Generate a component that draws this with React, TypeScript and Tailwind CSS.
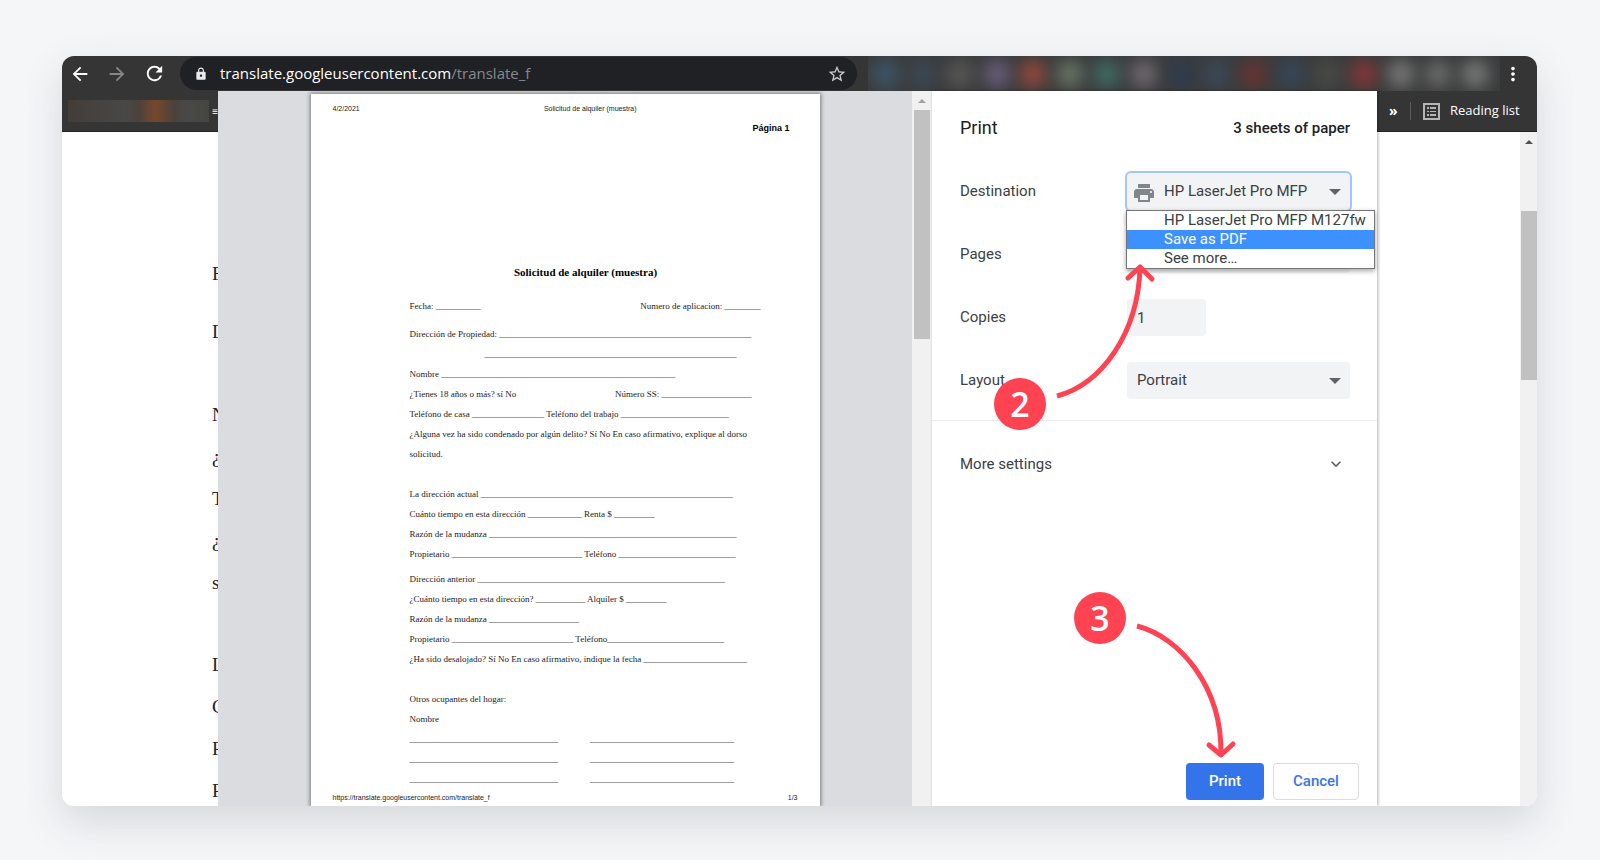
import React, { useState } from 'react';
import {
  MdArrowBack,
  MdArrowForward,
  MdExpandMore,
  MdLock,
  MdMoreVert,
  MdPrint,
  MdRefresh,
  MdStarBorder,
} from 'react-icons/md';

const line = (count: number) => '_'.repeat(count);

const extensionColors = [
  'bg-[#3d5468]', 'bg-[#3b4854]', 'bg-[#565654]', 'bg-[#665c78]', 'bg-[#8f483c]',
  'bg-[#667262]', 'bg-[#3f6a62]', 'bg-[#6e676e]', 'bg-[#2f3b4e]', 'bg-[#3b4858]',
  'bg-[#663432]', 'bg-[#364658]', 'bg-[#484a46]', 'bg-[#823638]', 'bg-[#747474]',
  'bg-[#686868]', 'bg-[#767676]',
];

const destinations = ['HP LaserJet Pro MFP M127fw', 'Save as PDF', 'See more…'];

const selectClass =
  'w-full h-[37px] rounded bg-[#f1f3f4] appearance-none outline-none text-[15px] text-[#3c4043]';

const CaretDown = () => (
  <svg viewBox="0 0 12 6" className="absolute right-[9px] top-4 w-3 h-[6px] fill-[#5f6368] pointer-events-none">
    <path d="M0 0h12L6 6z" />
  </svg>
);

const ReadingListIcon = () => (
  <svg viewBox="0 0 17 17" className="w-[17px] h-[17px] text-[#b4b4b4]" fill="currentColor">
    <path fillRule="evenodd" d="M0 0h17v17H0zM2 2v13h13V2z" />
    <path d="M4 4h2v2H4zM7 4h6v2H7zM4 8h2v1H4zM7 8h6v1H7zM4 11h2v2H4zM7 11h6v2H7z" />
  </svg>
);

const BrowserToolbar = () => (
  <header className="flex items-center h-[35px] bg-[#353535] text-white">
    <nav className="flex items-center gap-[15px] pl-[7px] w-[118px] shrink-0">
      <button aria-label="Back"><MdArrowBack className="w-[22px] h-[22px]" /></button>
      <button aria-label="Forward" className="text-[#868686]"><MdArrowForward className="w-[22px] h-[22px]" /></button>
      <button aria-label="Reload"><MdRefresh className="w-[23px] h-[23px]" /></button>
    </nav>
    <div className="flex items-center w-[677px] h-[33px] rounded-full bg-[#202124] pl-[14px] pr-[10px] shrink-0">
      <MdLock className="w-[14px] h-[14px] text-[#e8eaed]" />
      <a href="#" className="ml-3 flex-1 font-['Open_Sans',sans-serif] text-[15px]">
        translate.googleusercontent.com<span className="text-[#868a8f]">/translate_f</span>
      </a>
      <button aria-label="Bookmark"><MdStarBorder className="w-5 h-5 text-[#c8c8c8]" /></button>
    </div>
    <div className="flex flex-1 h-full ml-[11px] pr-[7px] overflow-hidden bg-[#3b3c3d]">
      {extensionColors.map((color, index) => (
        <div key={index} className="flex items-center justify-center flex-1">
          <div className={`w-7 h-7 shrink-0 rounded-full blur-[8px] ${color}`} />
        </div>
      ))}
    </div>
    <button aria-label="Menu" className="ml-[2px] mr-[13px]"><MdMoreVert className="w-[22px] h-[22px]" /></button>
  </header>
);

const pageLetters = ['N', '¿', 'T', '¿', 's'];
const lowerPageLetters = ['L', 'C', 'R', 'P'];

const PageLeft = () => (
  <aside className="w-[156px] shrink-0 overflow-hidden bg-white">
    <div className="flex items-center h-[41px] bg-[#353535] border-b border-[#222] pl-[6px]">
      <div className="w-[145px] h-[22px] bg-[linear-gradient(90deg,#433d38,#484848_40%,#4b423c_50%,#75482c_62%,#4b423c_75%,#484848_85%,#454540)]" />
      <span className="ml-[3px] text-[10px] leading-none text-white">≡</span>
    </div>
    <div className="pl-[150px] font-['Liberation_Serif',serif] text-[19px] leading-[42px] text-[#222]">
      <p className="mt-[121px]">F</p>
      <p className="mt-4">D</p>
      <div className="mt-[41px]">
        {pageLetters.map((letter, index) => <p key={index}>{letter}</p>)}
      </div>
      <div className="mt-10">
        {lowerPageLetters.map((letter, index) => <p key={index}>{letter}</p>)}
      </div>
    </div>
  </aside>
);

const DocumentPreview = () => (
  <section className="flex flex-1 justify-center bg-[#dadce0] pt-[3px] overflow-hidden">
    <article className="w-[509px] bg-white shadow-[0_0_4px_1px_rgba(0,0,0,0.45)] font-['Liberation_Serif',serif] text-[9px] leading-5 text-[#222]">
      <div className="flex justify-between pl-[22px] pr-[183px] pt-[10px] font-['Liberation_Sans',sans-serif] text-[7px] leading-[10px]">
        <span>4/2/2021</span>
        <span>Solicitud de alquiler (muestra)</span>
      </div>
      <p className="pt-1 pr-[30px] text-right font-['Liberation_Sans',sans-serif] font-bold text-black">Página 1</p>
      <div className="pl-[99px]">
        <h1 className="mt-[124px] pr-[58px] text-center text-[11px] font-bold text-black">
          Solicitud de alquiler (muestra)
        </h1>
        <div className="mt-[14px] pr-[59px] flex justify-between">
          <span>Fecha: {line(10)}</span>
          <span>Numero de aplicacion: {line(8)}</span>
        </div>
        <p className="mt-2">Dirección de Propiedad: {line(56)}</p>
        <p className="pl-[75px]">{line(56)}</p>
        <p>Nombre {line(52)}</p>
        <div className="flex justify-between pr-[68px]">
          <span>¿Tienes 18 años o más? sí No</span>
          <span>Número SS: {line(20)}</span>
        </div>
        <p>Teléfono de casa {line(16)} Teléfono del trabajo {line(24)}</p>
        <p>¿Alguna vez ha sido condenado por algún delito? Sí No En caso afirmativo, explique al dorso</p>
        <p>solicitud.</p>
        <p className="mt-5">La dirección actual {line(56)}</p>
        <p>Cuánto tiempo en esta dirección {line(12)} Renta $ {line(9)}</p>
        <p>Razón de la mudanza {line(55)}</p>
        <p>Propietario {line(29)} Teléfono {line(26)}</p>
        <p className="mt-[5px]">Dirección anterior {line(55)}</p>
        <p>¿Cuánto tiempo en esta dirección? {line(11)} Alquiler $ {line(9)}</p>
        <p>Razón de la mudanza {line(20)}</p>
        <p>Propietario {line(27)} Teléfono{line(26)}</p>
        <p>¿Ha sido desalojado? Sí No En caso afirmativo, indique la fecha {line(23)}</p>
        <p className="mt-5">Otros ocupantes del hogar:</p>
        <p>Nombre</p>
        {[0, 1, 2].map((row) => (
          <div key={row} className="flex gap-8">
            <span>{line(33)}</span>
            <span>{line(32)}</span>
          </div>
        ))}
      </div>
      <div className="flex justify-between px-[22px] pt-1 font-['Liberation_Sans',sans-serif] text-[7px] leading-[10px]">
        <span>https://translate.googleusercontent.com/translate_f</span>
        <span>1/3</span>
      </div>
    </article>
  </section>
);

const Scrollbar = () => (
  <div className="w-5 shrink-0 bg-[#f1f1f1] flex flex-col items-center">
    <svg viewBox="0 0 8 4" className="mt-2 w-2 h-1 fill-[#a3a3a3]"><path d="M0 4h8L4 0z" /></svg>
    <div className="mt-[7px] w-4 h-[229px] bg-[#c1c1c1]" />
  </div>
);

interface SettingRowProps {
  id: string;
  label: string;
  children: React.ReactNode;
}

const SettingRow: React.FC<SettingRowProps> = ({ id, label, children }) => (
  <div className="flex items-center justify-between h-[37px]">
    <label htmlFor={id}>{label}</label>
    <div className="relative w-[223px]">{children}</div>
  </div>
);

const Badge = ({ value, className }: { value: number; className: string }) => (
  <div className={`absolute w-[52px] h-[52px] rounded-full bg-[#ff4352] text-white flex items-center justify-center font-['Open_Sans',sans-serif] text-[34px] leading-none font-semibold pointer-events-none ${className}`}>
    {value}
  </div>
);

const PrintSettings = () => {
  const [copies, setCopies] = useState('1');
  const [layout, setLayout] = useState('Portrait');

  return (
    <section className="relative w-[445px] shrink-0 flex flex-col bg-white font-[Roboto,sans-serif] text-[15px] text-[#3c4043] shadow-[1px_0_3px_rgba(0,0,0,0.3)]">
      <div className="flex items-center justify-between pl-7 pr-[27px] pt-[22px] h-[52px] text-[#202124]">
        <h2 className="text-lg">Print</h2>
        <span className="font-medium">3 sheets of paper</span>
      </div>

      <div className="flex flex-col gap-[26px] pl-7 pr-[27px] pt-[30px] pb-[21px] border-b border-[#ececee]">
        <SettingRow id="destination" label="Destination">
          <select id="destination" className={`${selectClass} pl-[37px] ring-2 ring-[#a6c5f7]`}>
            <option>HP LaserJet Pro MFP</option>
          </select>
          <MdPrint className="absolute left-[5px] top-2 w-6 h-6 text-[#80868b] pointer-events-none" />
          <CaretDown />
          <ul
            role="listbox"
            aria-label="Destination"
            className="absolute z-10 -left-px top-[37px] w-[249px] border border-[#767676] bg-white shadow-[0_2px_5px_rgba(0,0,0,0.35)] leading-[19px]"
          >
            {destinations.map((name) => (
              <li
                key={name}
                role="option"
                aria-selected={name === 'Save as PDF'}
                className={`pl-[37px] whitespace-nowrap ${name === 'Save as PDF' ? 'bg-[#3d90ff] text-white' : ''}`}
              >
                {name}
              </li>
            ))}
          </ul>
        </SettingRow>
        <SettingRow id="pages" label="Pages">
          <select id="pages" className={`${selectClass} pl-[10px]`}>
            <option>All</option>
          </select>
        </SettingRow>
        <SettingRow id="copies" label="Copies">
          <input
            id="copies"
            value={copies}
            onChange={(e) => setCopies(e.target.value)}
            className="block w-[79px] h-[37px] rounded bg-[#f1f3f4] pl-[10px] outline-none"
          />
        </SettingRow>
        <SettingRow id="layout" label="Layout">
          <select
            id="layout"
            value={layout}
            onChange={(e) => setLayout(e.target.value)}
            className={`${selectClass} pl-[10px]`}
          >
            <option>Portrait</option>
            <option>Landscape</option>
          </select>
          <CaretDown />
        </SettingRow>
      </div>

      <button className="flex items-center justify-between h-[86px] pl-7 pr-[31px]">
        <span>More settings</span>
        <MdExpandMore className="w-5 h-5 text-[#5f6368]" />
      </button>

      <div className="mt-auto flex justify-end gap-[9px] pr-[18px] pb-[6px] font-medium">
        <button className="w-[78px] h-[37px] rounded bg-[#3374eb] text-white">Print</button>
        <button className="w-[86px] h-[37px] rounded border border-[#dadce0] text-[#3b74e8]">Cancel</button>
      </div>

      {/* Step markers */}
      <Badge value={2} className="left-[62px] top-[287px]" />
      <svg viewBox="0 0 104 140" className="absolute z-20 left-[122px] top-[170px] w-[104px] h-[140px] fill-none stroke-[#ff4352] pointer-events-none" strokeWidth="5">
        <path d="M3 135C48 123 84 72 86 7" />
        <path d="M74 17L86 6L98 18" strokeLinecap="round" strokeLinejoin="round" />
      </svg>
      <Badge value={3} className="left-[142px] top-[501px]" />
      <svg viewBox="0 0 104 144" className="absolute z-20 left-[202px] top-[530px] w-[104px] h-[144px] fill-none stroke-[#ff4352] pointer-events-none" strokeWidth="5">
        <path d="M3 5C46 16 88 66 87 133" />
        <path d="M75 124L87 134L99 123" strokeLinecap="round" strokeLinejoin="round" />
      </svg>
    </section>
  );
};

const PageRight = () => (
  <aside className="w-[160px] shrink-0 flex flex-col bg-white">
    <div className="flex items-center h-[41px] bg-[#353535] border-b border-[#222] text-white font-['Open_Sans',sans-serif] text-[13px]">
      <button aria-label="More bookmarks" className="ml-3 w-[21px] text-left text-sm font-bold leading-none">»</button>
      <span className="w-px h-[18px] bg-[#5c5c5c]" />
      <button className="flex items-center gap-[10px] ml-3">
        <ReadingListIcon />
        <span>Reading list</span>
      </button>
    </div>
    <div className="ml-auto w-[17px] flex-1 bg-[#f1f1f1] flex flex-col items-center">
      <svg viewBox="0 0 8 4" className="mt-2 w-2 h-1 fill-[#505050]"><path d="M0 4h8L4 0z" /></svg>
      <div className="mt-[67px] w-4 h-[169px] bg-[#c1c1c1]" />
    </div>
  </aside>
);

export default function App() {
  return (
    <main className="h-screen flex flex-col bg-[#f4f6f8] pl-[62px] pr-[63px] pt-14 pb-[54px] overflow-hidden">
      <div className="flex flex-col flex-1 min-h-0 rounded-xl overflow-hidden shadow-[0_16px_40px_rgba(60,64,67,0.16)]">
        <BrowserToolbar />
        <div className="flex flex-1 min-h-0">
          <PageLeft />
          <DocumentPreview />
          <Scrollbar />
          <PrintSettings />
          <PageRight />
        </div>
      </div>
    </main>
  );
}
